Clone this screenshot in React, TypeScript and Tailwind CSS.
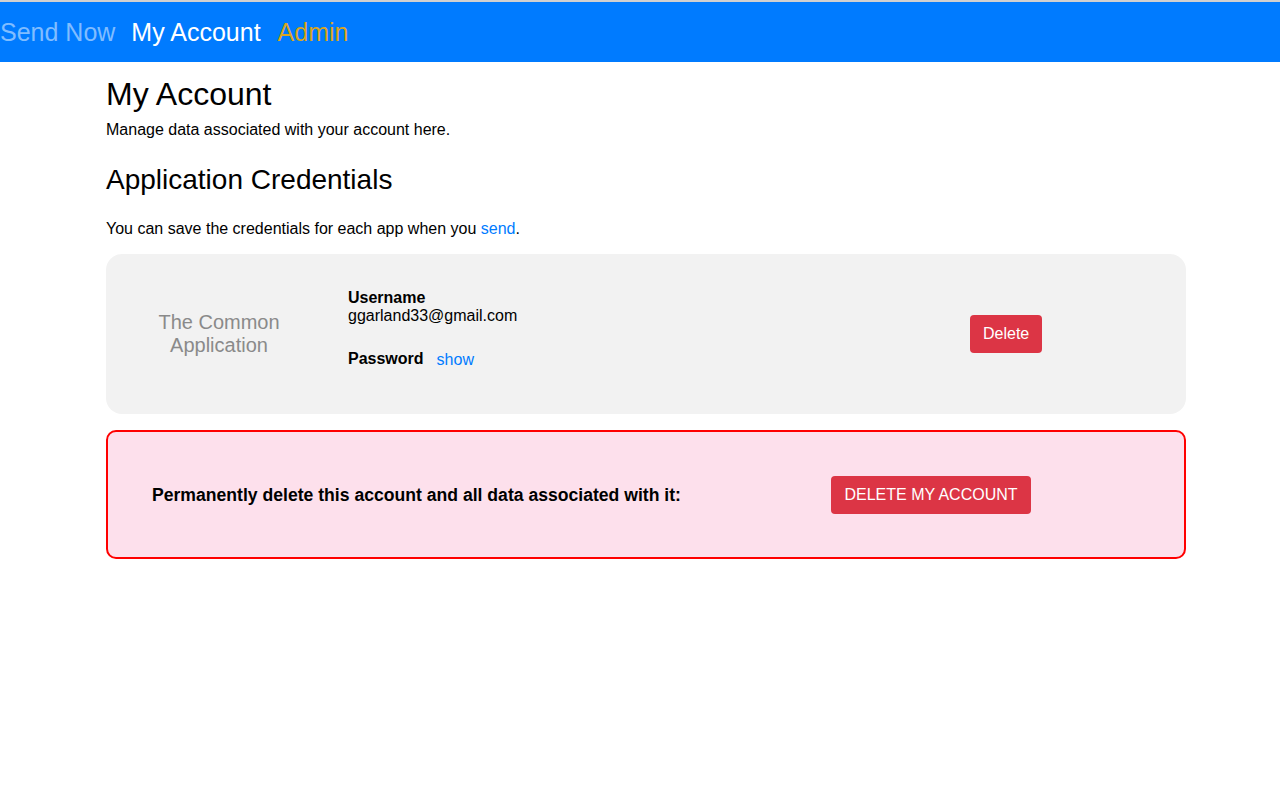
import React from 'react';

export default function App() {
  return (
    <div className="min-h-screen bg-white text-black font-['Liberation_Sans',Arial,sans-serif]">
      {/* Nav */}
      <div className="border-t-2 border-[#d0d0d0] bg-[#007bff] h-[62px] flex items-center gap-4 pt-[1px] text-[25px] leading-none">
        <a className="text-[#80bdff]">Send Now</a>
        <a className="text-white">My Account</a>
        <a className="ml-[1px] text-[#daa520]">Admin</a>
      </div>

      <main className="ml-[106px] w-[1080px]">
        <h1 className="text-[32px] leading-[38px] mt-[13px]">My Account</h1>
        <p className="text-[16px] leading-[18px] mt-[8px]">Manage data associated with your account here.</p>

        <h2 className="text-[28px] leading-[34px] mt-[24px]">Application Credentials</h2>
        <p className="text-[16px] leading-[18px] mt-[23px]">
          You can save the credentials for each app when you <a className="text-[#007bff]">send</a>.
        </p>

        {/* Credential card */}
        <div className="mt-[16px] h-[160px] bg-[#f2f2f2] rounded-2xl flex">
          <div className="w-[226px] flex items-center justify-center text-center text-[20px] leading-[23px] text-[#8a8a8a]">
            The Common
            <br />
            Application
          </div>
          <div className="ml-[16px] w-[622px] pt-[35px] text-[16px] leading-[18px]">
            <div className="font-bold">Username</div>
            <div>ggarland33@gmail.com</div>
            <div className="mt-[24px] flex items-center">
              <span className="font-bold">Password</span>
              <a className="ml-[13px] mt-[2px] text-[#007bff]">show</a>
            </div>
          </div>
          <div className="flex items-center">
            <button className="h-[38px] px-[13px] bg-[#dc3545] text-white rounded text-[16px]">Delete</button>
          </div>
        </div>

        {/* Danger zone */}
        <div className="mt-[16px] h-[129px] bg-[#fde0ec] border-2 border-[#ff0000] rounded-[10px] flex items-center pl-[44px]">
          <div className="w-[679px] font-bold text-[17.6px] leading-[20px]">
            Permanently delete this account and all data associated with it:
          </div>
          <button className="h-[38px] w-[200px] bg-[#dc3545] text-white rounded text-[16px]">DELETE MY ACCOUNT</button>
        </div>
      </main>
    </div>
  );
}
